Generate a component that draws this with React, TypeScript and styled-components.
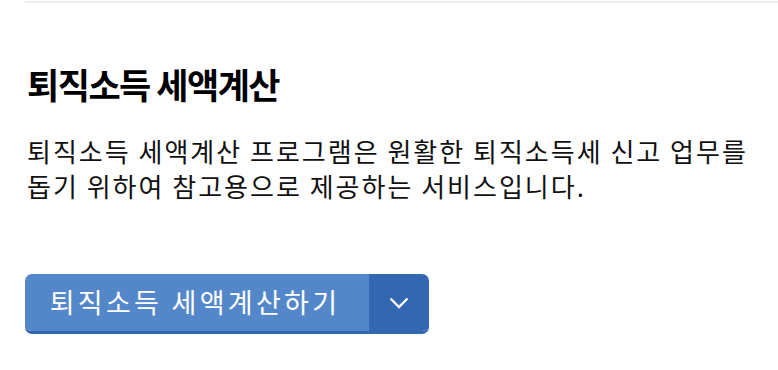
import React from "react";
import styled, { createGlobalStyle } from "styled-components";

const Global = createGlobalStyle`
  html, body { margin: 0; padding: 0; background: #fff; }
  body { font-family: "Noto Sans CJK KR", "Noto Sans", sans-serif; color: #111; }
`;

const Page = styled.div`
  padding: 1px 0 0 25px;
`;

const Rule = styled.div`
  height: 2px;
  background: #ececec;
`;

const Title = styled.h2`
  margin: 57px 0 0 2px;
  font-size: 35px;
  line-height: 48px;
  font-weight: 700;
  letter-spacing: -1.5px;
  color: #000;
`;

const Desc = styled.p`
  margin: 25px 0 0 2px;
  font-size: 26px;
  line-height: 35px;
  font-weight: 400;
  letter-spacing: 2px;
  color: #111;
`;

const SplitButton = styled.div`
  margin-top: 71px;
  display: inline-flex;
  height: 60px;
  border-radius: 7px;
  overflow: hidden;
  box-sizing: border-box;
  border-bottom: 3px solid #3366b0;
`;

const MainPart = styled.button`
  width: 344px;
  border: 0;
  background: #5487c9;
  color: #fff;
  font-family: inherit;
  font-size: 27px;
  letter-spacing: 3.3px;
  display: flex;
  align-items: center;
  justify-content: center;
  padding: 0 4px 3px 0;
  cursor: pointer;
`;

const ToggleIcon = styled.button`
  width: 60px;
  border: 0;
  background: #3367b1;
  display: flex;
  align-items: center;
  justify-content: center;
  padding: 0;
  cursor: pointer;
`;

export default function App() {
  return (
    <Page>
      <Global />
      <Rule />
      <Title>퇴직소득 세액계산</Title>
      <Desc>
        퇴직소득 세액계산 프로그램은 원활한 퇴직소득세 신고 업무를
        <br />
        돕기 위하여 참고용으로 제공하는 서비스입니다.
      </Desc>
      <SplitButton>
        <MainPart>퇴직소득 세액계산하기</MainPart>
        <ToggleIcon aria-label="more">
          <svg width="20" height="12" viewBox="0 0 20 12" fill="none">
            <path d="M1.5 1.5 L10 10 L18.5 1.5" stroke="#fff" strokeWidth="2.4" />
          </svg>
        </ToggleIcon>
      </SplitButton>
    </Page>
  );
}
